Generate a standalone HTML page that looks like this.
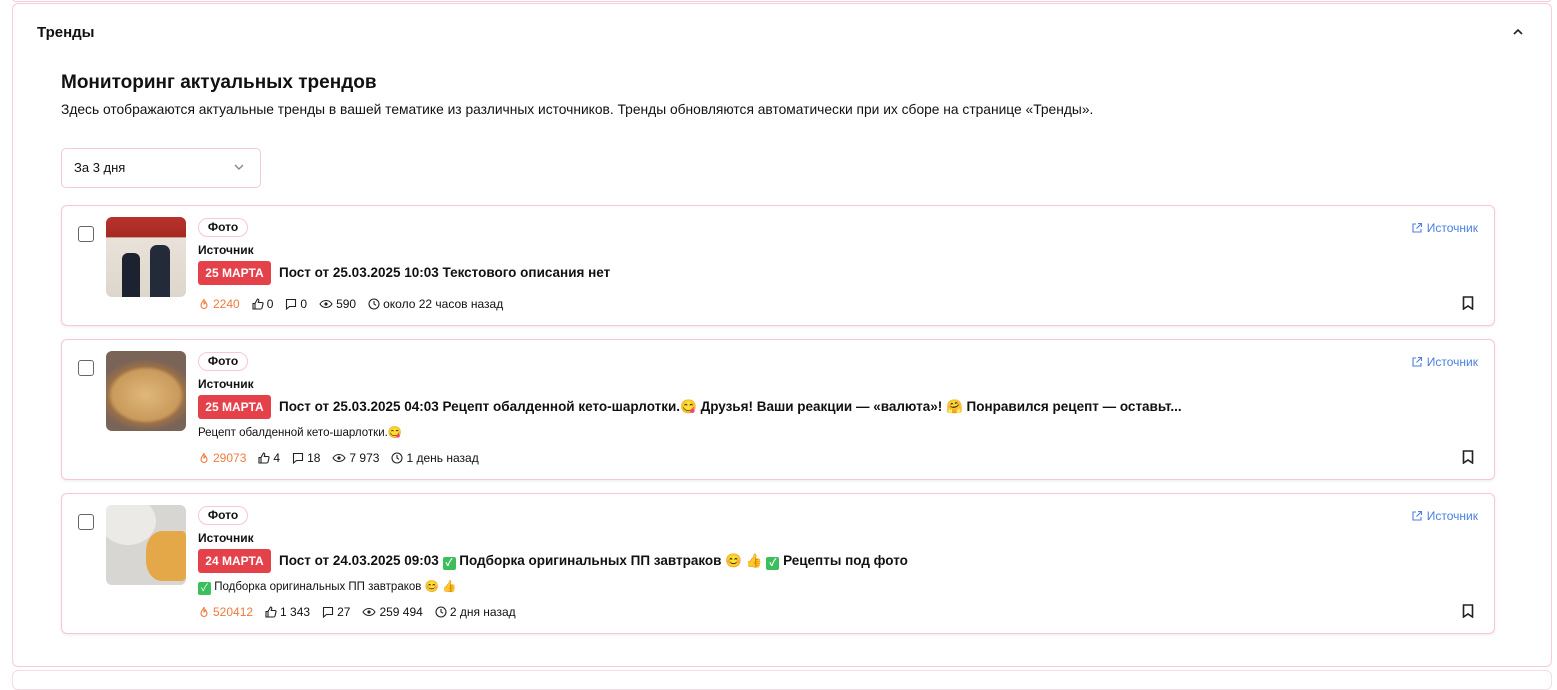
<!DOCTYPE html>
<html><head><meta charset="utf-8"><style>
*{box-sizing:border-box;margin:0;padding:0}
body{width:1557px;height:674px;overflow:hidden;background:#fff;font-family:"Liberation Sans","Noto Sans CJK JP",sans-serif;color:#111;position:relative}
.a{position:absolute;white-space:nowrap}
.outer{position:absolute;left:12px;top:3px;width:1540px;height:664px;border:1px solid #f8cbd8;border-radius:6px}
.topline{position:absolute;left:12px;top:-6px;width:1540px;height:8px;border:1px solid #f8cbd8;border-radius:6px}
.botline{position:absolute;left:12px;top:670px;width:1540px;height:20px;border:1px solid #f0dfe4;border-radius:6px}
.card{position:absolute;left:61px;width:1434px;border:1px solid #f8c6d5;border-radius:6px;box-shadow:0 1px 3px rgba(0,0,0,.08)}
.cb{position:absolute;left:16px;width:16px;height:16px;border:1.5px solid #666;border-radius:3px}
.th{position:absolute;left:44px;width:80px;height:80px;border-radius:6px;overflow:hidden}
.pill{position:absolute;left:136px;height:19px;width:50px;border:1px solid #f8c6d5;border-radius:10px;font-size:12px;font-weight:bold;text-align:center;line-height:17px}
.src{position:absolute;left:136px;font-size:12px;font-weight:bold}
.badge{position:absolute;left:136px;height:24px;width:73px;background:#e5414b;color:#fff;border-radius:3px;font-size:12px;font-weight:bold;text-align:center;line-height:24px}
.title{position:absolute;left:217px;font-size:13.5px;font-weight:bold;line-height:24px;white-space:nowrap}
.desc{position:absolute;left:136px;font-size:11.5px;white-space:nowrap}
.st{position:absolute;left:136px;font-size:12px;display:flex;align-items:center;white-space:nowrap}
.st span{display:inline-flex;align-items:center;margin-right:12px}
.st svg{margin-right:3px}
.or{color:#f07a3c}
.lnk{position:absolute;right:16px;font-size:12px;color:#4a7fe0;display:flex;align-items:center}
.lnk svg{margin-right:4px}
.bm{position:absolute;right:20px}
.ok{display:inline-block;width:13px;height:13px;background:#3bbf5c;border-radius:2px;color:#fff;font-size:10px;line-height:13px;text-align:center;vertical-align:-1px}
</style></head><body>
<svg width="0" height="0" style="position:absolute">
<defs>
<symbol id="fire" viewBox="0 0 12 12"><path d="M6 1C6 3 3 4.5 3 7.5a3 3 0 0 0 6 0C9 6 8 5 7.5 4 7 5.5 6 6 6 6 6 4 6.5 2.5 6 1z" fill="none" stroke="#f07a3c" stroke-width="1.1"/></symbol>
<symbol id="like" viewBox="0 0 12 12"><path d="M1 5.5h2V11H1zM3 5.5L5.5 1c1 0 1.5.7 1.2 2L6.3 4.5H10c.7 0 1.2.6 1 1.3l-1 4.2c-.2.6-.6 1-1.2 1H3" fill="none" stroke="#222" stroke-width="1.1"/></symbol>
<symbol id="cm" viewBox="0 0 12 12"><path d="M1.5 1.5h9v7h-6l-3 2.5z" fill="none" stroke="#222" stroke-width="1.1"/></symbol>
<symbol id="eye" viewBox="0 0 14 12"><path d="M1 6c1.5-2.5 3.5-3.5 6-3.5S11.5 3.5 13 6c-1.5 2.5-3.5 3.5-6 3.5S2.5 8.5 1 6z" fill="none" stroke="#222" stroke-width="1.1"/><circle cx="7" cy="6" r="1.6" fill="#222"/></symbol>
<symbol id="clk" viewBox="0 0 12 12"><circle cx="6" cy="6" r="5" fill="none" stroke="#222" stroke-width="1.1"/><path d="M6 3v3l2 1.3" fill="none" stroke="#222" stroke-width="1.1"/></symbol>
<symbol id="ext" viewBox="0 0 12 12"><path d="M5 2H2v8h8V7M7 1.5h3.5V5M10.5 1.5L5.5 6.5" fill="none" stroke="#4a7fe0" stroke-width="1.1"/></symbol>
</defs></svg>
<div class="topline"></div>
<div class="outer"></div>
<div class="botline"></div>
<div class="a" style="left:37px;top:24px;font-size:15px;font-weight:bold">Тренды</div>
<svg class="a" style="left:1512px;top:27px" width="12" height="10" viewBox="0 0 12 10"><path d="M2 7l4-4 4 4" fill="none" stroke="#222" stroke-width="1.6"/></svg>
<div class="a" style="left:61px;top:72px;font-size:19px;font-weight:bold">Мониторинг актуальных трендов</div>
<div class="a" style="left:61px;top:102px;font-size:13.8px">Здесь отображаются актуальные тренды в вашей тематике из различных источников. Тренды обновляются автоматически при их сборе на странице «Тренды».</div>
<div class="a" style="left:61px;top:148px;width:200px;height:40px;border:1px solid #f8c6d5;border-radius:5px"></div>
<div class="a" style="left:74px;top:160px;font-size:13px">За 3 дня</div>
<svg class="a" style="left:233px;top:163px" width="12" height="8" viewBox="0 0 12 8"><path d="M2 2l4 4 4-4" fill="none" stroke="#888" stroke-width="1.4"/></svg>

<!-- card 1 -->
<div class="card" style="top:205px;height:121px">
<div class="cb" style="top:20px"></div>
<div class="th" style="top:11px;background:linear-gradient(180deg,#b8322e 0,#a52a22 25%,#e8e2da 26%,#ddd6cc 100%)"><div style="position:absolute;left:16px;top:36px;width:18px;height:44px;background:#1c2230;border-radius:6px 6px 0 0"></div><div style="position:absolute;left:44px;top:28px;width:20px;height:52px;background:#232a3a;border-radius:7px 7px 0 0"></div></div>
<div class="pill" style="top:12px">Фото</div>
<div class="src" style="top:37px">Источник</div>
<div class="badge" style="top:55px">25 МАРТА</div>
<div class="title" style="top:55px">Пост от 25.03.2025 10:03 Текстового описания нет</div>
<div class="st" style="top:91px"><span class="or"><svg width="12" height="12"><use href="#fire"/></svg>2240</span><span><svg width="12" height="12"><use href="#like"/></svg>0</span><span><svg width="12" height="12"><use href="#cm"/></svg>0</span><span><svg width="14" height="12"><use href="#eye"/></svg>590</span><span><svg width="12" height="12"><use href="#clk"/></svg>около 22 часов назад</span></div>
<div class="lnk" style="top:15px"><svg width="12" height="12"><use href="#ext"/></svg>Источник</div>
<svg class="bm" style="top:90px" width="12" height="14" viewBox="0 0 12 14"><path d="M1.5 1h9v12L6 10l-4.5 3z" fill="none" stroke="#222" stroke-width="1.6"/></svg>
</div>

<!-- card 2 -->
<div class="card" style="top:339px;height:141px">
<div class="cb" style="top:20px"></div>
<div class="th" style="top:11px;background:radial-gradient(ellipse 60% 45% at 50% 55%,#e0b87a 0,#c99a5c 70%,#9a7048 80%,#7a6458 100%)"></div>
<div class="pill" style="top:12px">Фото</div>
<div class="src" style="top:37px">Источник</div>
<div class="badge" style="top:55px">25 МАРТА</div>
<div class="title" style="top:55px">Пост от 25.03.2025 04:03 Рецепт обалденной кето-шарлотки.😋 Друзья! Ваши реакции — «валюта»! 🤗 Понравился рецепт — оставьт...</div>
<div class="desc" style="top:85px">Рецепт обалденной кето-шарлотки.😋</div>
<div class="st" style="top:111px"><span class="or"><svg width="12" height="12"><use href="#fire"/></svg>29073</span><span><svg width="12" height="12"><use href="#like"/></svg>4</span><span><svg width="12" height="12"><use href="#cm"/></svg>18</span><span><svg width="14" height="12"><use href="#eye"/></svg>7 973</span><span><svg width="12" height="12"><use href="#clk"/></svg>1 день назад</span></div>
<div class="lnk" style="top:15px"><svg width="12" height="12"><use href="#ext"/></svg>Источник</div>
<svg class="bm" style="top:110px" width="12" height="14" viewBox="0 0 12 14"><path d="M1.5 1h9v12L6 10l-4.5 3z" fill="none" stroke="#222" stroke-width="1.6"/></svg>
</div>

<!-- card 3 -->
<div class="card" style="top:493px;height:141px">
<div class="cb" style="top:20px"></div>
<div class="th" style="top:11px;background:#d8d6d2"><div style="position:absolute;left:-6px;top:-8px;width:56px;height:48px;background:#eceae6;border-radius:50%"></div><div style="position:absolute;left:40px;top:26px;width:40px;height:50px;background:#e8a030;border-radius:40% 10% 10% 40%;opacity:.85"></div></div>
<div class="pill" style="top:12px">Фото</div>
<div class="src" style="top:37px">Источник</div>
<div class="badge" style="top:55px">24 МАРТА</div>
<div class="title" style="top:55px">Пост от 24.03.2025 09:03 <span class="ok">✓</span> Подборка оригинальных ПП завтраков 😊 👍 <span class="ok">✓</span> Рецепты под фото</div>
<div class="desc" style="top:85px"><span class="ok">✓</span> Подборка оригинальных ПП завтраков 😊 👍</div>
<div class="st" style="top:111px"><span class="or"><svg width="12" height="12"><use href="#fire"/></svg>520412</span><span><svg width="12" height="12"><use href="#like"/></svg>1 343</span><span><svg width="12" height="12"><use href="#cm"/></svg>27</span><span><svg width="14" height="12"><use href="#eye"/></svg>259 494</span><span><svg width="12" height="12"><use href="#clk"/></svg>2 дня назад</span></div>
<div class="lnk" style="top:15px"><svg width="12" height="12"><use href="#ext"/></svg>Источник</div>
<svg class="bm" style="top:110px" width="12" height="14" viewBox="0 0 12 14"><path d="M1.5 1h9v12L6 10l-4.5 3z" fill="none" stroke="#222" stroke-width="1.6"/></svg>
</div>
</body></html>
